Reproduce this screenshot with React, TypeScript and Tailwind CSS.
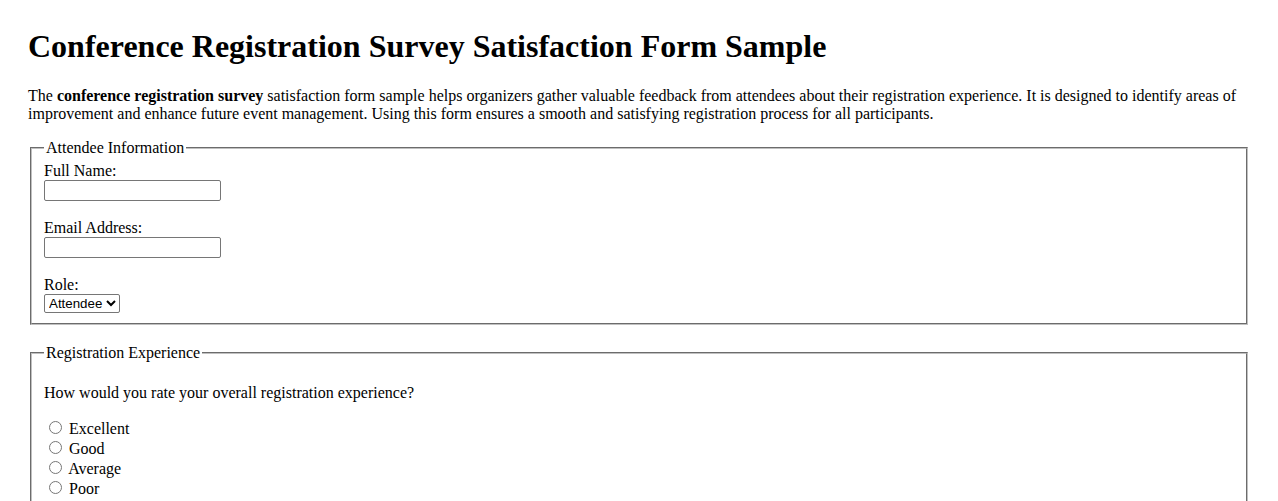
import React from 'react';

const radioOptions = ['Excellent', 'Good', 'Average', 'Poor', 'Very Poor'];

const fieldsetCls =
  "mx-[2px] mb-[19px] border-2 border-[#c0c0c0] [border-style:groove] pt-[5.6px] px-3 pb-[10px] min-w-0";

const inputCls =
  "border border-[#767676] rounded-[2px] w-[177px] h-[21px] px-[2px] font-['Liberation_Sans',sans-serif] text-[13.33px] align-bottom";

export default function App() {
  return (
    <div className="font-['Liberation_Serif',serif] text-base leading-[normal] text-black bg-white px-[28px] pt-[7px] pb-5 min-h-screen">
      <h1 className="text-[32px] font-bold my-[21.44px]">Conference Registration Survey Satisfaction Form Sample</h1>
      <p className="my-4">
        The <strong className="font-bold">conference registration survey</strong> satisfaction form sample helps organizers gather valuable feedback from attendees about their registration experience. It is designed to identify areas of improvement and enhance future event management. Using this form ensures a smooth and satisfying registration process for all participants.
      </p>
      <form>
        <fieldset className={fieldsetCls}>
          <legend className="px-[2px]">Attendee Information</legend>
          <label htmlFor="name">Full Name:</label>
          <br />
          <input id="name" type="text" className={inputCls} />
          <br />
          <br />
          <label htmlFor="email">Email Address:</label>
          <br />
          <input id="email" type="email" className={inputCls} />
          <br />
          <br />
          <label htmlFor="role">Role:</label>
          <br />
          <select
            id="role"
            defaultValue="Attendee"
            className="border border-[#767676] rounded-[2px] w-[76px] h-[19px] font-['Liberation_Sans',sans-serif] text-[13.33px] align-bottom"
          >
            <option>Attendee</option>
            <option>Speaker</option>
            <option>Sponsor</option>
            <option>Organizer</option>
          </select>
        </fieldset>

        <fieldset className={fieldsetCls}>
          <legend className="px-[2px]">Registration Experience</legend>
          <p className="my-4">How would you rate your overall registration experience?</p>
          {radioOptions.map((opt) => (
            <div key={opt}>
              <input
                type="radio"
                name="overall"
                id={`overall-${opt}`}
                className="ml-[5px] mr-[3px] mt-[3px] w-[13px] h-[13px]"
              />{' '}
              <label htmlFor={`overall-${opt}`}>{opt}</label>
            </div>
          ))}
        </fieldset>
      </form>
    </div>
  );
}
